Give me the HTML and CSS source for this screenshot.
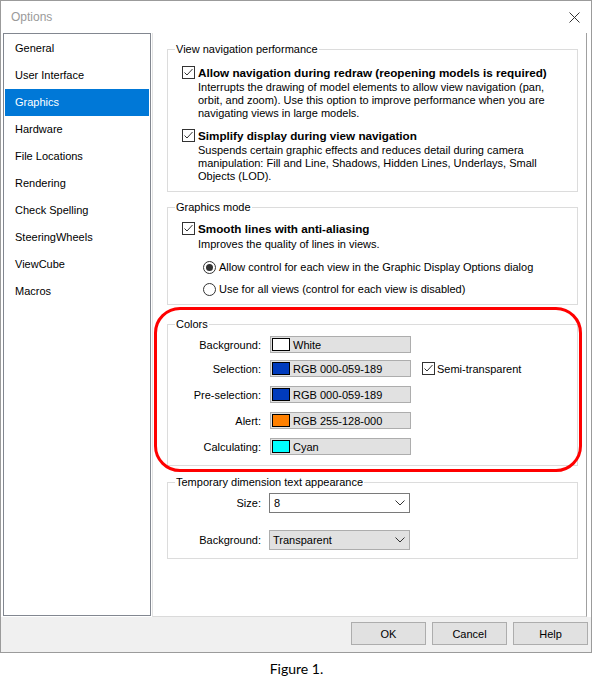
FILE: index.html
```html
<!DOCTYPE html>
<html>
<head>
<meta charset="utf-8">
<title>Options</title>
<link rel="stylesheet" href="styles.css">
</head>
<body>
<div class="dialog">
  <div class="titlebar">
    <span class="title">Options</span>
    <svg class="close" width="11" height="11" viewBox="0 0 11 11"><path d="M0.5 0.5 L10.5 10.5 M10.5 0.5 L0.5 10.5" stroke="#333" stroke-width="1" fill="none"/></svg>
  </div>
  <div class="main">
    <ul class="nav">
      <li>General</li>
      <li>User Interface</li>
      <li class="active">Graphics</li>
      <li>Hardware</li>
      <li>File Locations</li>
      <li>Rendering</li>
      <li>Check Spelling</li>
      <li>SteeringWheels</li>
      <li>ViewCube</li>
      <li>Macros</li>
    </ul>
    <div class="panel">
      <fieldset class="group g1">
        <legend>View navigation performance</legend>
        <div class="gbody b1">
          <div class="check-row">
            <svg class="cb" width="13" height="13" viewBox="0 0 13 13"><rect x="0.5" y="0.5" width="12" height="12" fill="#fff" stroke="#333"/><path d="M2.5 6.5 L5 9 L10.5 3" fill="none" stroke="#333" stroke-width="1"/></svg>
            <span class="strong">Allow navigation during redraw (reopening models is required)</span>
          </div>
          <p class="desc">Interrupts the drawing of model elements to allow view navigation (pan,<br>orbit, and zoom). Use this option to improve performance when you are<br>navigating views in large models.</p>
          <div class="check-row second">
            <svg class="cb" width="13" height="13" viewBox="0 0 13 13"><rect x="0.5" y="0.5" width="12" height="12" fill="#fff" stroke="#333"/><path d="M2.5 6.5 L5 9 L10.5 3" fill="none" stroke="#333" stroke-width="1"/></svg>
            <span class="strong">Simplify display during view navigation</span>
          </div>
          <p class="desc">Suspends certain graphic effects and reduces detail during camera<br>manipulation: Fill and Line, Shadows, Hidden Lines, Underlays, Small<br>Objects (LOD).</p>
        </div>
      </fieldset>

      <fieldset class="group g2">
        <legend>Graphics mode</legend>
        <div class="gbody b2">
          <div class="check-row">
            <svg class="cb" width="13" height="13" viewBox="0 0 13 13"><rect x="0.5" y="0.5" width="12" height="12" fill="#fff" stroke="#333"/><path d="M2.5 6.5 L5 9 L10.5 3" fill="none" stroke="#333" stroke-width="1"/></svg>
            <span class="strong">Smooth lines with anti-aliasing</span>
          </div>
          <p class="desc desc-one">Improves the quality of lines in views.</p>
          <div class="radio-row first-radio">
            <svg class="rb" width="13" height="13" viewBox="0 0 13 13"><circle cx="6.5" cy="6.5" r="6" fill="#fff" stroke="#333"/><circle cx="6.5" cy="6.5" r="3.5" fill="#333"/></svg>
            <span>Allow control for each view in the Graphic Display Options dialog</span>
          </div>
          <div class="radio-row">
            <svg class="rb" width="13" height="13" viewBox="0 0 13 13"><circle cx="6.5" cy="6.5" r="6" fill="#fff" stroke="#333"/></svg>
            <span>Use for all views (control for each view is disabled)</span>
          </div>
        </div>
      </fieldset>

      <fieldset class="group g3">
        <legend>Colors</legend>
        <div class="gbody b3">
          <div class="color-row">
            <span class="flabel">Background:</span>
            <div class="cfield"><span class="swatch sw-white"></span><span>White</span></div>
          </div>
          <div class="color-row row-sel">
            <span class="flabel">Selection:</span>
            <div class="cfield"><span class="swatch sw-blue"></span><span>RGB 000-059-189</span></div>
            <div class="semi">
              <svg class="cb" width="13" height="13" viewBox="0 0 13 13"><rect x="0.5" y="0.5" width="12" height="12" fill="#fff" stroke="#333"/><path d="M2.5 6.5 L5 9 L10.5 3" fill="none" stroke="#333" stroke-width="1"/></svg>
              <span>Semi-transparent</span>
            </div>
          </div>
          <div class="color-row">
            <span class="flabel">Pre-selection:</span>
            <div class="cfield"><span class="swatch sw-blue"></span><span>RGB 000-059-189</span></div>
          </div>
          <div class="color-row">
            <span class="flabel">Alert:</span>
            <div class="cfield"><span class="swatch sw-orange"></span><span>RGB 255-128-000</span></div>
          </div>
          <div class="color-row">
            <span class="flabel">Calculating:</span>
            <div class="cfield"><span class="swatch sw-cyan"></span><span>Cyan</span></div>
          </div>
        </div>
      </fieldset>

      <fieldset class="group g4">
        <legend>Temporary dimension text appearance</legend>
        <div class="gbody b4">
          <div class="sel-row">
            <span class="slabel">Size:</span>
            <div class="combo combo-white"><span>8</span>
              <svg class="chev" width="10" height="6" viewBox="0 0 10 6"><path d="M0.5 0.5 L5 5 L9.5 0.5" fill="none" stroke="#333" stroke-width="1"/></svg>
            </div>
          </div>
          <div class="sel-row second-sel">
            <span class="slabel">Background:</span>
            <div class="combo combo-grey"><span>Transparent</span>
              <svg class="chev" width="10" height="6" viewBox="0 0 10 6"><path d="M0.5 0.5 L5 5 L9.5 0.5" fill="none" stroke="#333" stroke-width="1"/></svg>
            </div>
          </div>
        </div>
      </fieldset>

      <div class="highlight"></div>
    </div>
  </div>
  <div class="footer">
    <button class="btn">OK</button>
    <button class="btn">Cancel</button>
    <button class="btn">Help</button>
  </div>
</div>
<p class="caption">Figure 1.</p>
</body>
</html>
```

FILE: styles.css
```css
html, body {
  margin: 0;
  padding: 0;
  background: #ffffff;
}
body {
  font-family: "Liberation Sans", Arial, sans-serif;
  font-size: 11px;
  color: #000;
}
.dialog {
  width: 590px;
  border: 1px solid #9b9b9b;
  background: #ffffff;
}
.titlebar {
  height: 32px;
  display: flex;
  align-items: center;
  justify-content: space-between;
  padding: 0 11px 0 10px;
}
.title {
  font-size: 12px;
  color: #9a9a9a;
}
.close {
  display: block;
}
.main {
  display: flex;
  align-items: flex-start;
  gap: 1px;
  padding: 0 3px 0 2px;
  height: 584px;
}
.nav {
  list-style: none;
  margin: 0;
  padding: 1px;
  width: 148px;
  height: 583px;
  box-sizing: border-box;
  border: 1px solid #828790;
  flex: none;
}
.nav li {
  height: 27px;
  line-height: 27px;
  padding-left: 10px;
  color: #000;
}
.nav li.active {
  background: #0078d7;
  color: #fff;
}
.panel {
  position: relative;
  width: 435px;
  height: 584px;
  box-sizing: border-box;
  border-left: 1px solid #e3e3e3;
  border-right: 1px solid #a0a0a0;
  border-bottom: 1px solid #dadada;
  padding: 8px 8px 0 14px;
  flex: none;
}
.group {
  margin: 0;
  padding: 0;
  border: 1px solid #dcdcdc;
  min-width: 0;
}
.group legend {
  padding: 0 1px;
  margin-left: 7px;
  line-height: 16px;
  font-size: 11px;
}
.g2 { margin-top: 7px; }
.g3 { margin-top: 11px; }
.g4 { margin-top: 8px; }

.b1 { padding: 7px 0 8px 14px; }
.b2 { padding: 5px 0 4px 14px; }
.b3 { padding: 4px 0 10px 0; }
.b4 { padding: 3px 0 8px 0; }

.check-row {
  display: flex;
  align-items: center;
  height: 16px;
}
.check-row.second { margin-top: 7px; }
.cb, .rb {
  display: block;
  flex: none;
  margin-right: 3px;
}
.strong {
  font-weight: bold;
  font-size: 11.7px;
}
.desc {
  margin: 1px 0 0 16px;
  line-height: 13px;
}
.desc-one { margin-top: 2px; }
.radio-row {
  display: flex;
  align-items: center;
  height: 22px;
  margin-left: 21px;
}
.first-radio { margin-top: 5px; }

.color-row {
  display: flex;
  align-items: center;
  height: 17px;
  margin-top: 9px;
}
.color-row:first-child { margin-top: 0; }
.color-row.row-sel { margin-top: 7px; }
.flabel, .slabel {
  width: 93px;
  text-align: right;
  flex: none;
}
.flabel { margin-right: 9px; }
.slabel { margin-right: 8px; }
.cfield {
  width: 141px;
  height: 17px;
  box-sizing: border-box;
  background: #e1e1e1;
  border: 1px solid #adadad;
  display: flex;
  align-items: center;
  padding-left: 1px;
  flex: none;
}
.swatch {
  width: 18px;
  height: 13px;
  box-sizing: border-box;
  border: 1px solid #000;
  margin-right: 3px;
  flex: none;
}
.sw-white { background: #ffffff; }
.sw-blue { background: #003bbd; }
.sw-orange { background: #ff8000; }
.sw-cyan { background: #00ffff; }
.semi {
  display: flex;
  align-items: center;
  margin-left: 11px;
}
.semi .cb { margin-right: 2px; }

.sel-row {
  display: flex;
  align-items: center;
  height: 20px;
}
.second-sel { margin-top: 17px; }
.combo {
  width: 141px;
  height: 20px;
  box-sizing: border-box;
  display: flex;
  align-items: center;
  flex: none;
}
.combo-white {
  background: #fff;
  border: 1px solid #7a7a7a;
  padding-left: 4px;
}
.combo-grey {
  background: #e1e1e1;
  border: 1px solid #adadad;
  padding-left: 3px;
}
.chev {
  display: block;
  margin-left: auto;
  margin-right: 4px;
}

.highlight {
  position: absolute;
  left: 1px;
  top: 274px;
  width: 428px;
  height: 165px;
  box-sizing: border-box;
  border: 3px solid #ff0000;
  border-radius: 26px;
  pointer-events: none;
}

.footer {
  height: 35px;
  box-sizing: border-box;
  background: #f0f0f0;
  display: flex;
  justify-content: flex-end;
  gap: 6px;
  padding: 5px 3px 0 0;
}
.btn {
  width: 75px;
  height: 23px;
  box-sizing: border-box;
  background: #e1e1e1;
  border: 1px solid #adadad;
  font-family: "Liberation Sans", Arial, sans-serif;
  font-size: 11px;
  color: #000;
  padding: 0;
  margin: 0;
}
.caption {
  margin: 7px 0 0;
  text-align: center;
  font-family: Lato, "Liberation Sans", sans-serif;
  font-size: 14px;
  line-height: 18px;
  color: #000;
}
```
